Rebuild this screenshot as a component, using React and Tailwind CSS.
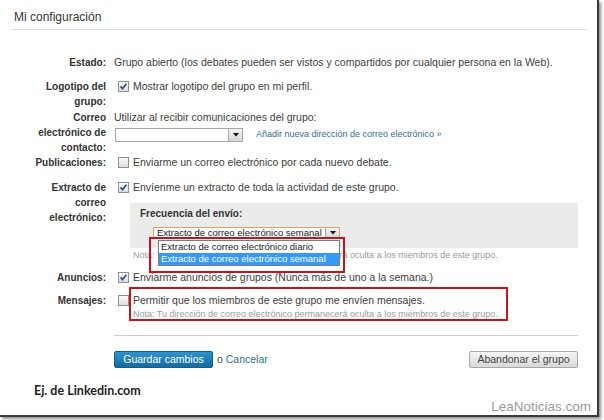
import React from "react";

const Checkbox = ({ checked }) => (
  <svg width="11" height="11" viewBox="0 0 11 11" className="shrink-0">
    <defs>
      <linearGradient id="cbg" x1="0" y1="0" x2="0" y2="1">
        <stop offset="0" stopColor="#fdfdfd" />
        <stop offset="1" stopColor="#dcdcdc" />
      </linearGradient>
    </defs>
    <rect x="0.5" y="0.5" width="10" height="10" fill="url(#cbg)" stroke="#8e8f8f" />
    {checked && (
      <path d="M2.6 5.4 L4.5 7.6 L8.4 2.8" fill="none" stroke="#2d4f8f" strokeWidth="1.7" />
    )}
  </svg>
);

const Arrow = () => (
  <div className="w-[14px] h-full shrink-0 bg-gradient-to-b from-[#f4f4f4] to-[#d6d6d6] border-l border-[#a9a9a9] flex items-center justify-center">
    <svg width="6" height="4" viewBox="0 0 6 4">
      <path d="M0 0 L6 0 L3 3.5 Z" fill="#111" />
    </svg>
  </div>
);

function Row({ label, className, children }) {
  return (
    <div className={"flex " + (className || "")}>
      <div className="w-[106px] shrink-0 text-right font-bold text-[10px] text-[#333] leading-[15px]">{label}</div>
      <div className="ml-[8px] flex-1 text-[10.5px] leading-[15px] text-[#3c3c3c]">{children}</div>
    </div>
  );
}

const CheckLine = ({ checked, children }) => (
  <div className="flex items-center h-[15px] whitespace-nowrap">
    <span className="ml-[4px] mr-[4px]"><Checkbox checked={checked} /></span>
    <span>{children}</span>
  </div>
);

const nota = "Nota: Tu dirección de correo electrónico permanecerá oculta a los miembros de este grupo.";

export default function App() {
  return (
    <div className="w-[604px] h-[420px] bg-white overflow-hidden font-['Liberation_Sans',Arial,sans-serif] text-[10px]">
      <div className="relative w-[599px] h-[417px] bg-white border-r-2 border-b-2 border-[#3a3a3a] shadow-[2px_2px_3px_rgba(0,0,0,0.45)]">
        {/* cabecera */}
        <div className="pl-[14px] pt-[9px] text-[12px] leading-[16px] text-[#333]">Mi configuración</div>
        <div className="ml-[12px] mt-[4px] h-px w-[574px] bg-[#dadada]" />

        <div className="mt-[25px]">
          <Row label="Estado:">
            <div className="whitespace-nowrap">Grupo abierto (los debates pueden ser vistos y compartidos por cualquier persona en la Web).</div>
          </Row>

          <Row label={<>Logotipo del<br />grupo:</>} className="mt-[9px]">
            <CheckLine checked>Mostrar logotipo del grupo en mi perfil.</CheckLine>
          </Row>

          <Row label={<>Correo<br />electrónico de<br />contacto:</>} className="mt-[1px]">
            <div>Utilizar al recibir comunicaciones del grupo:</div>
            <div className="flex items-center mt-[2px]">
              <div className="ml-[1px] w-[128px] h-[14px] bg-white border border-[#a5a5a5] flex justify-end">
                <Arrow />
              </div>
              <a className="ml-[13px] text-[9px] text-[#2f6f97] whitespace-nowrap">Añadir nueva dirección de correo electrónico »</a>
            </div>
          </Row>

          <Row label="Publicaciones:">
            <CheckLine>Enviarme un correo electrónico por cada nuevo debate.</CheckLine>
          </Row>

          <Row label={<>Extracto de<br />correo<br />electrónico:</>} className="mt-[10px]">
            <CheckLine checked>Envíenme un extracto de toda la actividad de este grupo.</CheckLine>
            <div className="ml-[16px] mt-[8px] w-[448px] h-[45px] bg-[#ebebeb] pl-[10px] pt-[3px]">
              <div className="font-bold text-[10px] text-[#333] leading-[15px]">Frecuencia del envío:</div>
              <div className="relative ml-[13px] mt-[6px] w-[187px] h-[12px] bg-white border border-[#d9a95a] flex items-center text-[9.5px]">
                <span className="flex-1 pl-[3px] leading-[10px] text-[#222] whitespace-nowrap overflow-hidden">Extracto de correo electrónico semanal</span>
                <Arrow />
                {/* lista desplegada */}
                <div className="absolute left-[4px] top-[12px] w-[182px] bg-white border border-[#7a7a7a] text-[#222] leading-[12px] whitespace-nowrap z-10">
                  <div className="pl-[2px] h-[12px]">Extracto de correo electrónico diario</div>
                  <div className="pl-[2px] h-[12px] bg-[#3399ff] text-white">Extracto de correo electrónico semanal</div>
                </div>
                <div className="absolute left-[-5px] top-[9px] w-[196px] h-[36px] border-2 border-[#c8121e] z-20" />
              </div>
            </div>
            <div className="ml-[19px] mt-[1px] text-[9px] leading-[12px] text-[#9a9a9a] whitespace-nowrap">{nota}</div>
          </Row>

          <Row label="Anuncios:" className="mt-[9px]">
            <CheckLine checked>Enviarme anuncios de grupos (Nunca más de uno a la semana.)</CheckLine>
          </Row>

          <Row label="Mensajes:" className="mt-[8px]">
            <div className="relative">
              <CheckLine>Permitir que los miembros de este grupo me envíen mensajes.</CheckLine>
              <div className="ml-[19px] text-[9px] leading-[12px] text-[#9a9a9a] whitespace-nowrap">{nota}</div>
              <div className="absolute left-[15px] top-[-6px] w-[379px] h-[34px] border-2 border-[#c8121e]" />
            </div>
          </Row>
        </div>

        <div className="ml-[114px] mt-[15px] h-px w-[464px] bg-[#cfcfcf]" />

        <div className="ml-[114px] mt-[15px] w-[464px] flex items-center justify-between">
          <div className="flex items-center">
            <button className="h-[17px] w-[99px] rounded-[2px] border border-[#0f5f8e] bg-gradient-to-b from-[#2f93cb] to-[#136ca3] text-white text-[10.5px] leading-[15px]">
              Guardar cambios
            </button>
            <span className="ml-[4px] text-[10.5px] text-[#444]">o <a className="text-[#2f6f97]">Cancelar</a></span>
          </div>
          <button className="h-[17px] w-[109px] rounded-[2px] border border-[#a8a8a8] bg-gradient-to-b from-[#f6f6f6] to-[#d9d9d9] text-[#444] text-[10.5px] leading-[15px]">
            Abandonar el grupo
          </button>
        </div>

        <div className="ml-[34px] mt-[15px] font-['Lato',sans-serif] font-bold text-[12.5px] leading-[16px] text-[#1e1e1e]">
          Ej. de Linkedin.com
        </div>

        <div className="absolute top-[398px] right-[6px] text-[13.5px] leading-[18px] text-[#9a9a9a]">LeaNoticias.com</div>
      </div>
    </div>
  );
}
